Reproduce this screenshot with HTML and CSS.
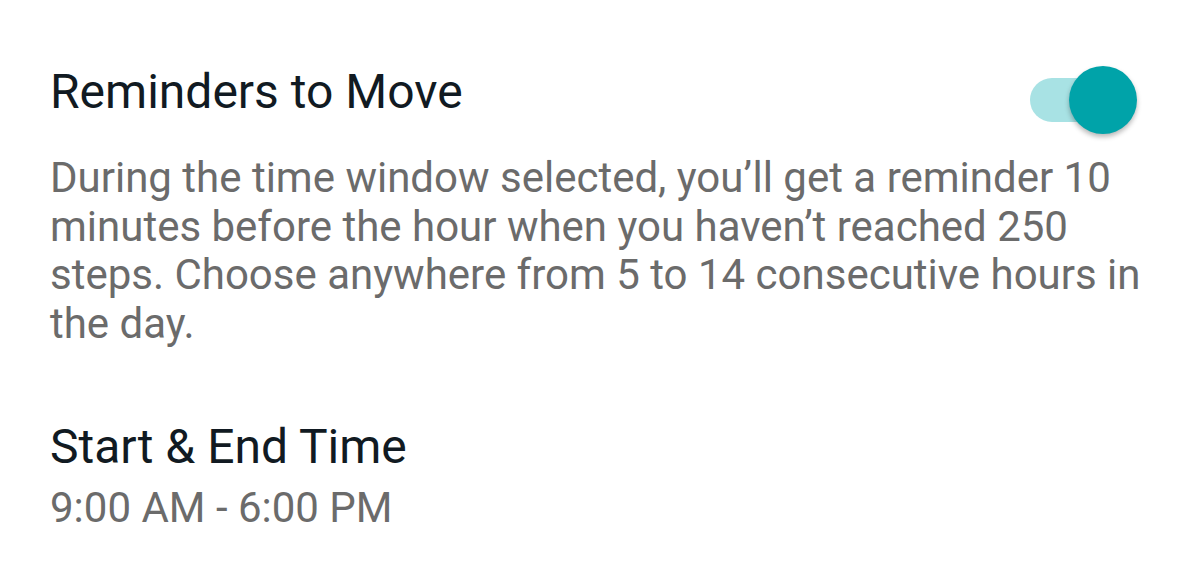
FILE: index.html
```html
<!DOCTYPE html>
<html>
<head>
<meta charset="utf-8">
<link rel="stylesheet" href="styles.css">
</head>
<body>
<div class="page">
  <section class="setting">
    <div class="head">
      <h1 class="title">Reminders to Move</h1>
      <div class="toggle"><span class="track"></span><span class="thumb"></span></div>
    </div>
    <p class="desc">During the time window selected, you’ll get a reminder 10 minutes before the hour when you haven’t reached 250 steps. Choose anywhere from 5 to 14 consecutive hours in the day.</p>
  </section>
  <section class="setting time">
    <h2 class="title">Start &amp; End Time</h2>
    <p class="value">9:00 AM - 6:00 PM</p>
  </section>
</div>
</body>
</html>
```
FILE: styles.css
```css
html, body { margin: 0; padding: 0; background: #fff; }
body { font-family: Roboto, "Noto Sans", sans-serif; }
.page { width: 1200px; height: 566px; overflow: hidden; padding: 0 50px; box-sizing: border-box; }
.setting { margin: 0; }
.head { display: flex; justify-content: space-between; align-items: flex-start; padding-top: 64px; }
.title { margin: 0; font-weight: 400; font-size: 48px; line-height: 56px; color: #111a22; }
.desc { margin: 20px 0 0; font-size: 42px; line-height: 48.5px; color: #6b6b6b; }
.toggle { position: relative; width: 107px; height: 68px; margin-top: 2px; margin-right: 13px; }
.track { position: absolute; left: 0; top: 12px; width: 90px; height: 44px; border-radius: 22px; background: #a8e2e4; }
.thumb { position: absolute; right: 0; top: 0; width: 68px; height: 68px; border-radius: 50%; background: #00a3a9; box-shadow: 0 3px 5px rgba(0,0,0,0.28); }
.time { margin-top: 71px; }
.value { margin: 5px 0 0; font-size: 42px; line-height: 56px; color: #6b6b6b; }
```
